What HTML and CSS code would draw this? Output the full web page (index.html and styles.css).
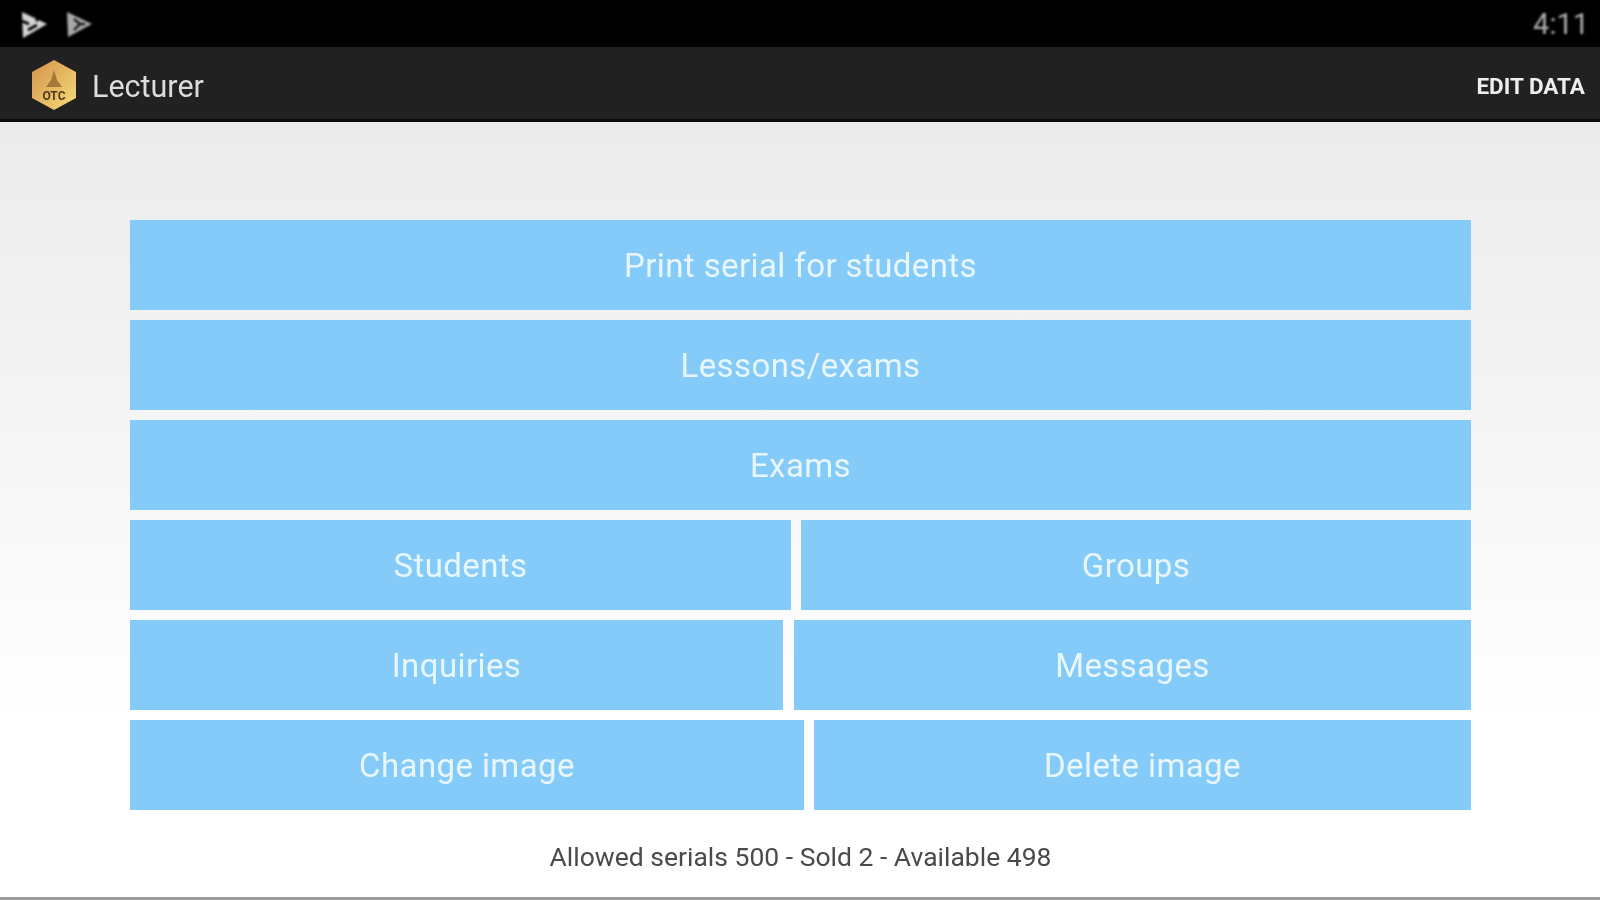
FILE: index.html
```html
<!DOCTYPE html>
<html lang="en">
<head>
  <meta charset="UTF-8">
  <meta name="viewport" content="width=device-width, initial-scale=1.0">
  <title>Lecturer</title>
  <link rel="stylesheet" href="styles.css">
</head>
<body>
  <div class="statusbar">
    <div class="status-icons">
      <svg class="play" width="28" height="30" viewBox="0 0 28 30">
        <path d="M2 3 L27 15 L3 29 Z" fill="#d4d4d4"/>
        <path d="M27 1 L16 12 M8 21 L17 16 M2 12 L9 15" stroke="#000" stroke-width="2.6" fill="none"/>
      </svg>
      <svg class="play" width="28" height="30" viewBox="0 0 28 30">
        <path d="M2 3 L27 15 L3 28 Z" fill="#a8a8a8"/>
        <path d="M9 10 L15 15 L9 21 M15 15 L20 15" stroke="#1a1a1a" stroke-width="2.4" fill="none"/>
      </svg>
    </div>
    <span class="clock">4:11</span>
  </div>
  <header class="actionbar">
    <svg class="logo" width="48" height="52" viewBox="0 0 48 52">
      <defs>
        <linearGradient id="gold" x1="0" y1="0" x2="1" y2="1">
          <stop offset="0" stop-color="#d4924c"/>
          <stop offset="1" stop-color="#f6dc78"/>
        </linearGradient>
      </defs>
      <path d="M24 1 L46 13 L46 39 L24 51 L2 39 L2 13 Z" fill="url(#gold)"/>
      <path d="M24 11 L27 21 L32 28 L16 28 L21 21 Z" fill="#a5793a"/>
      <text class="logo-text" x="24" y="41" text-anchor="middle">OTC</text>
    </svg>
    <span class="app-title">Lecturer</span>
    <span class="edit-data">EDIT DATA</span>
  </header>
  <main class="content">
    <div class="menu">
      <div class="row"><button class="btn"><span>Print serial for students</span></button></div>
      <div class="row"><button class="btn"><span>Lessons/exams</span></button></div>
      <div class="row"><button class="btn"><span>Exams</span></button></div>
      <div class="row students"><button class="btn"><span>Students</span></button><button class="btn"><span>Groups</span></button></div>
      <div class="row inquiries"><button class="btn"><span>Inquiries</span></button><button class="btn"><span>Messages</span></button></div>
      <div class="row images"><button class="btn"><span>Change image</span></button><button class="btn"><span>Delete image</span></button></div>
    </div>
    <p class="serials">Allowed serials 500 - Sold 2 - Available 498</p>
  </main>
</body>
</html>
```

FILE: styles.css
```css
html, body {
  margin: 0;
  height: 100%;
}
body {
  width: 1600px;
  height: 900px;
  overflow: hidden;
  display: flex;
  flex-direction: column;
  background: #fff;
  font-family: Roboto, "Liberation Sans", sans-serif;
}
.statusbar {
  height: 47px;
  background: #000;
  display: flex;
  align-items: center;
  justify-content: space-between;
  padding: 0 11px 0 20px;
}
.status-icons {
  display: flex;
  gap: 17px;
}
.play {
  display: block;
  filter: blur(0.8px);
}
.clock {
  color: #b0b0b0;
  font-size: 29px;
  filter: blur(0.8px);
}
.actionbar {
  height: 68px;
  padding: 4px 15px 0 30px;
  background: #212121;
  border-bottom: 3px solid #0c0c0c;
  display: flex;
  align-items: center;
}
.logo {
  filter: blur(0.6px);
}
.logo-text {
  font-size: 12px;
  font-weight: 700;
  fill: #4d3a1c;
}
.app-title {
  margin: 3px 0 0 14px;
  color: #dcdcdc;
  font-size: 30.5px;
  filter: blur(0.7px);
}
.edit-data {
  margin: 2px 0 0 auto;
  color: #eeeeee;
  font-size: 22.5px;
  font-weight: 700;
  filter: blur(0.7px);
}
.content {
  flex: 1;
  background: linear-gradient(#ebebeb, #fff 78%);
  border-bottom: 3px solid #9a9a9a;
  padding: 98px 129px 0 130px;
  display: flex;
  flex-direction: column;
}
.menu {
  display: flex;
  flex-direction: column;
  gap: 10px;
}
.row {
  display: flex;
  gap: 10px;
  height: 90px;
}
.btn {
  flex: 1;
  border: none;
  padding: 0;
  background: #85cbf9;
  color: #e8f6fd;
  font-family: inherit;
  font-size: 33px;
  letter-spacing: 0.4px;
}
.btn span {
  display: inline-block;
  filter: blur(0.7px);
}
.students .btn:first-child {
  flex: 0 0 661px;
}
.inquiries {
  gap: 11px;
}
.inquiries .btn:first-child {
  flex: 0 0 653px;
}
.images .btn:first-child {
  flex: 0 0 674px;
}
.serials {
  margin: 31px 0 0;
  text-align: center;
  color: #4a4a4a;
  font-size: 26.5px;
  filter: blur(0.7px);
}
```
